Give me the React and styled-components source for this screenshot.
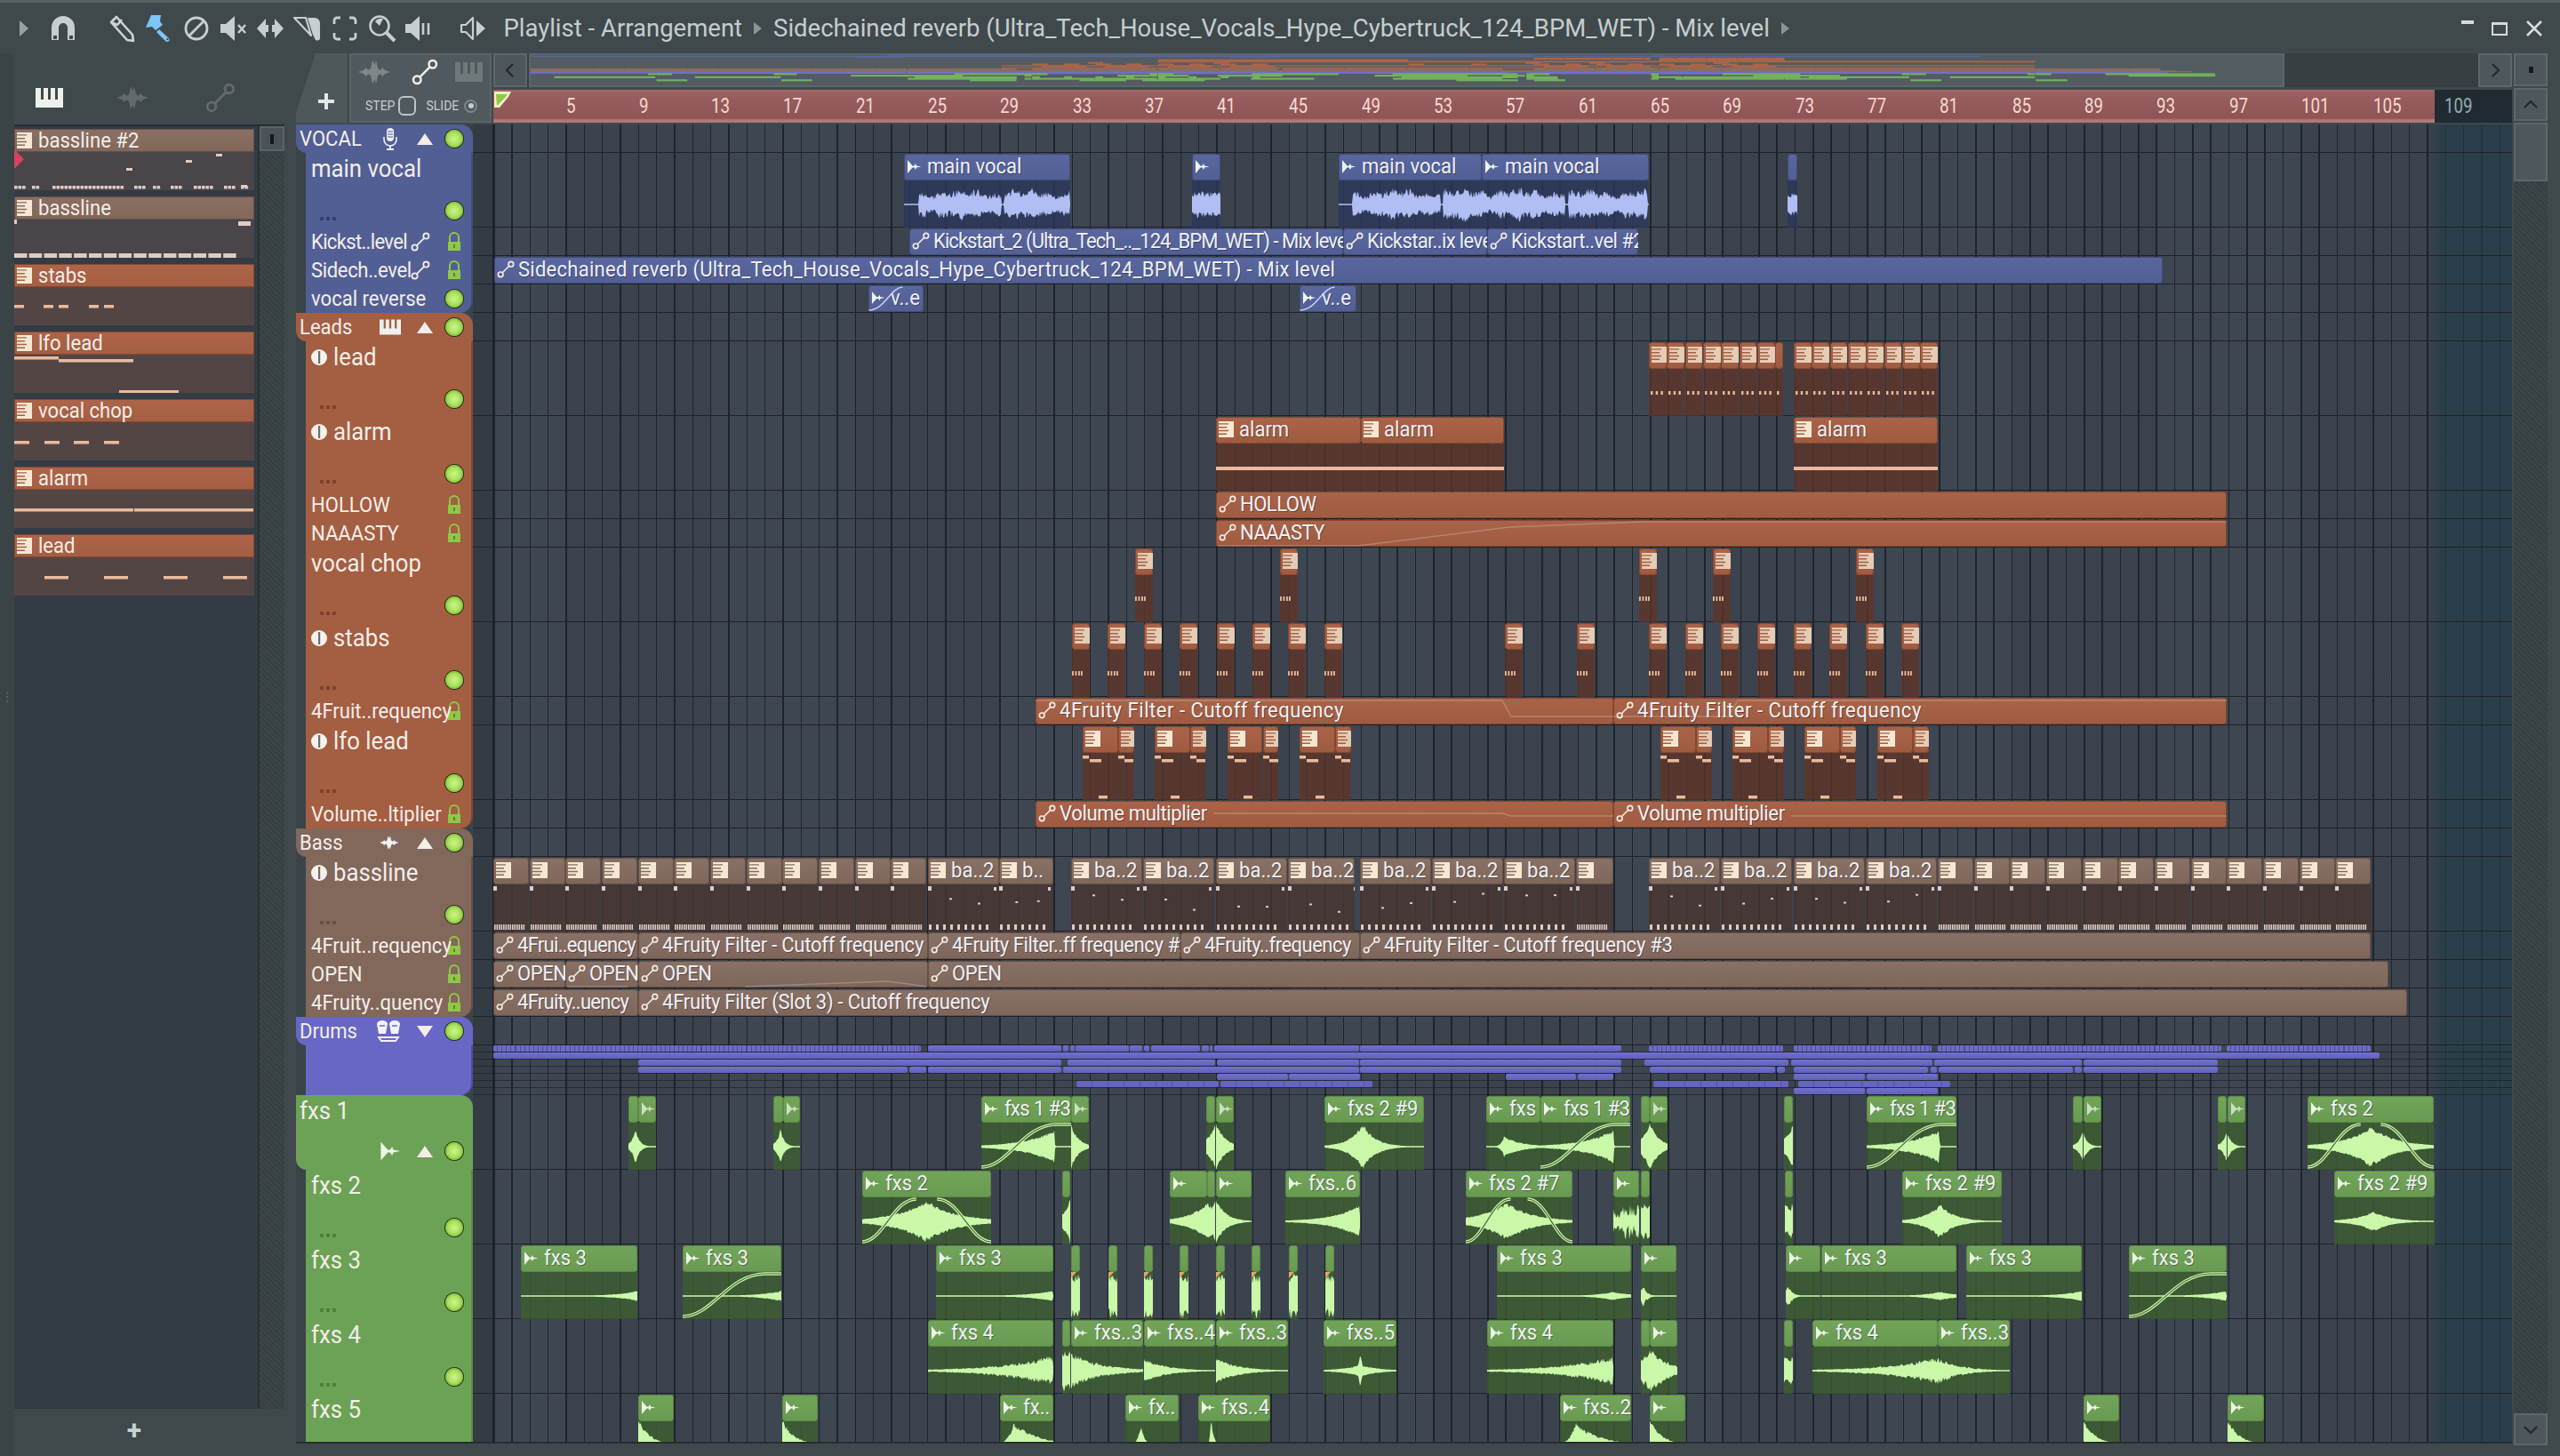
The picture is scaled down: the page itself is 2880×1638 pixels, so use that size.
import React from 'react';
import styled, { createGlobalStyle } from 'styled-components';

const GlobalStyle = createGlobalStyle`
  html, body { margin: 0; padding: 0; background: #3f494c; }
  * { box-sizing: border-box; }
`;

const BAR = 20.33;
const LANE_X = 532;

const tones = {
  blue: { head: '#525f94', top: '#5a67a0', clip: '#525f94', clipTop: '#5a67a0', edge: '#404c7c', body: 'rgba(42,55,90,.8)', ink: '#b0bef4', dots: '#343f70' },
  orange: { head: '#a45e42', top: '#ad654a', clip: '#9f5b40', clipTop: '#a96349', edge: '#86472f', body: 'rgba(94,53,40,.8)', ink: '#e9bb9d', dots: '#7e4230' },
  brown: { head: '#82675b', top: '#8a6f63', clip: '#7f665b', clipTop: '#8a7165', edge: '#665045', body: 'rgba(72,54,49,.8)', ink: '#dccbc3', dots: '#665045' },
  purple: { head: '#6867c5', top: '#7170cf', clip: '#6867c5', clipTop: '#7170cf', edge: '#4f4ea0', body: 'rgba(72,54,49,.8)', ink: '#fff', dots: '#4f4ea0' },
  green: { head: '#6ca255', top: '#74aa5c', clip: '#699a51', clipTop: '#72a45a', edge: '#5b8a44', body: 'rgba(61,94,48,.8)', ink: '#c9f8a9', dots: '#4f8038' },
};

// wave envelopes, x in page pixels
const S = (p, a, l, r = l) => x => a * Math.exp(-Math.abs(x - p) * (x < p ? l : r));
const F = (from, to, a) => x => (x >= from && x <= to ? a : 0);

const hash = n => {
  const v = Math.sin(n * 12.9898) * 43758.5453;
  return v - Math.floor(v);
};

const wavePath = (x0, w, env, noise, cy) => {
  const up = [];
  const down = [];
  for (let i = 0; i <= w; i += 1) {
    const x = x0 + i;
    const slow = noise >= 0.5 ? 0.66 + 0.34 * Math.abs(Math.sin(x * 0.045)) + 0.12 * Math.sin(x * 0.31) : 1;
    const e = Math.max(...env.map(f => f(x))) * slow;
    const a = Math.max(0.8, e * (1 - noise * hash(x * 1.3)));
    const b = Math.max(0.8, e * (1 - noise * hash(x * 2.7 + 5)));
    up.push(`${i} ${(cy - a).toFixed(1)}`);
    down.unshift(`${i} ${(cy + b).toFixed(1)}`);
  }
  return `M${up.join('L')}L${down.join('L')}Z`;
};

const W = (x, w, label, env, opts = {}) => ({ type: 'audio', x, w, label, env, ...opts });
const P = (x, w, label, notes) => ({ type: 'pattern', x, w, label, notes });
const A = (x, w, label, trace, ls) => ({ type: 'auto', x, w, label, trace, ls });
const R = (x, w, label, curve) => ({ type: 'reverse', x, w, label, curve });

const range = n => Array.from({ length: n }, (_, i) => i);

const leadNotes = w => range(Math.floor(w / 5.7)).map(i => [2 + i * 5.7, 56, 2.4, 4]);
const stabNotes = () => [0, 3.5, 7, 10].map(o => [o, 55, 1.8, 5]);
const leadGroup = (x, n, extra) => [
  ...range(n).map(i => P(x + i * BAR, BAR - 0.6, '', leadNotes(BAR))),
  ...(extra ? [P(x + n * BAR, extra, '', leadNotes(extra))] : []),
];
const lfoPair = x => [
  P(x, 39.5, '', [[0, 34, 7, 3.5], [8, 38, 13, 3.5], [18, 79, 10, 3.5]]),
  P(x + 40, 17.5, '', [[0, 34, 7, 3.5], [7, 38, 10, 3.5]]),
];
const bassNotes = (w, seed) => [
  [0, 33, 4, 5],
  ...(w > 60 ? [[w - 6, 34, 3, 4], [w * 0.3, 60 - 18 * hash(seed), 3, 2], [w * 0.7, 66 - 26 * hash(seed + 1), 3, 2]] : []),
  ...range(Math.floor((w - 3) / (w > 60 ? 8 : 2.5))).map(i => [1 + i * (w > 60 ? 8 : 2.5), 76, w > 60 ? 3 : 1.6, 6]),
];

const upCurve = 'up';
const bellCurve = 'bell';

const groups = [
  {
    title: 'VOCAL', tone: 'blue', icon: 'mic',
    rows: [
      { kind: 'big', name: 'main vocal', clips: [
        W(1017, 187, 'main vocal', [F(1034, 1126, 17), F(1130, 1203, 17)], { n: 0.5 }),
        W(1341, 32, '', [F(1341, 1373, 15)], { n: 0.45 }),
        W(1506, 161, 'main vocal', [F(1522, 1620, 17), F(1624, 1667, 18)], { n: 0.5 }),
        W(1667, 188, 'main vocal', [F(1667, 1760, 18), F(1765, 1853, 17)], { n: 0.5 }),
        W(2011, 11, '', [F(2011, 2022, 13)], { n: 0.45 }),
      ] },
      { kind: 'auto', name: 'Kickst..level', ls: -0.75, link: true, clips: [
        A(1023, 488, 'Kickstart_2 (Ultra_Tech_.._124_BPM_WET) - Mix level', null, -1.05),
        A(1511, 162, 'Kickstar..ix level', null, -0.7),
        A(1673, 170, 'Kickstart..vel #2', null, -0.6),
      ] },
      { kind: 'auto', name: 'Sidech..evel', ls: -0.4, link: true, clips: [
        A(556, 1877, 'Sidechained reverb (Ultra_Tech_House_Vocals_Hype_Cybertruck_124_BPM_WET) - Mix level', null, 0.25),
      ] },
      { kind: 'mini', name: 'vocal reverse', clips: [
        R(977, 62, 'v..e', true),
        R(1462, 64, 'v..e', true),
      ] },
    ],
  },
  {
    title: 'Leads', tone: 'orange', icon: 'piano',
    rows: [
      { kind: 'big', info: true, name: 'lead', clips: [...leadGroup(1855, 7, 9), ...leadGroup(2018, 8)] },
      { kind: 'big', info: true, name: 'alarm', clips: [
        P(1368, 163, 'alarm', [[0, 57, 163, 4]]),
        P(1531, 161, 'alarm', [[0, 57, 161, 4]]),
        P(2018, 162, 'alarm', [[0, 57, 162, 4]]),
      ] },
      { kind: 'auto', name: 'HOLLOW', clips: [A(1368, 1137, 'HOLLOW', null, -0.6)] },
      { kind: 'auto', name: 'NAAASTY', clips: [A(1368, 1137, 'NAAASTY', [[0, 29], [160, 29], [330, 8], [480, 2], [1137, 2]], -0.6)] },
      { kind: 'big', name: 'vocal chop', clips: [1277, 1440, 1844, 1927, 2088].map(x => P(x, 20, '', stabNotes())) },
      { kind: 'big', info: true, name: 'stabs', clips: [1205.6, 1246, 1287, 1327, 1368.6, 1408.5, 1449, 1490, 1693, 1774, 1855, 1896, 1936, 1977, 2018, 2058, 2099, 2139].map(x => P(x, 20, '', stabNotes())) },
      { kind: 'auto', name: '4Fruit..requency', clips: [
        A(1165, 650, '4Fruity Filter - Cutoff frequency', [[0, 3], [525, 3], [535, 21], [650, 21]], 0.55),
        A(1815, 690, '4Fruity Filter - Cutoff frequency', [[0, 21], [130, 21], [140, 3], [690, 3]], 0.55),
      ] },
      { kind: 'big', info: true, name: 'lfo lead', clips: [1218, 1299, 1380.5, 1462, 1868, 1949, 2030, 2112].flatMap(lfoPair) },
      { kind: 'auto', name: 'Volume..ltiplier', clips: [
        A(1165, 650, 'Volume multiplier', [[200, 14], [525, 14], [535, 17], [650, 17]], -0.4),
        A(1815, 690, 'Volume multiplier', [[200, 17], [690, 17]], -0.4),
      ] },
    ],
  },
  {
    title: 'Bass', tone: 'brown', icon: 'wave',
    rows: [
      { kind: 'big', info: true, name: 'bassline', clips: [
        ...range(12).map(i => P(555 + i * 40.66, 40, '', bassNotes(40, i))),
        P(1044, 80, 'ba..2', bassNotes(80, 20)),
        P(1124, 61, 'b..', bassNotes(61, 21)),
        ...[1205, 1286, 1368, 1449, 1530, 1611, 1692, 1855, 1936, 2018, 2099].map((x, i) => P(x, x === 1449 ? 75 : 80, 'ba..2', bassNotes(80, 30 + i))),
        P(1773, 42, '', bassNotes(40, 60)),
        ...range(12).map(i => P(2180 + i * 40.66, 40, '', bassNotes(40, i + 70))),
      ] },
      { kind: 'auto', name: '4Fruit..requency', clips: [
        A(555, 163, '4Frui..equency', null, -0.8),
        A(718, 326, '4Fruity Filter - Cutoff frequency', null, -0.3),
        A(1044, 284, '4Fruity Filter..ff frequency #2', null, -0.5),
        A(1328, 202, '4Fruity..frequency', null, -0.6),
        A(1530, 1137, '4Fruity Filter - Cutoff frequency #3', null, -0.3),
      ] },
      { kind: 'auto', name: 'OPEN', clips: [
        A(555, 81, 'OPEN', null, -0.5),
        A(636, 82, 'OPEN', [[0, 29], [70, 29]], -0.5),
        A(718, 326, 'OPEN', [[120, 29], [280, 23], [326, 29]], -0.5),
        A(1044, 1643, 'OPEN', null, -0.5),
      ] },
      { kind: 'auto', name: '4Fruity..quency', clips: [
        A(555, 163, '4Fruity..uency', null, -0.8),
        A(718, 1990, '4Fruity Filter (Slot 3) - Cutoff frequency', null, -0.3),
      ] },
    ],
  },
  {
    title: 'Drums', tone: 'purple', icon: 'drums', closed: true,
    thin: [
      { striped: true, bars: [[555, 481], [1855, 151], [2018, 155], [2180, 163], [2343, 156], [2505, 162]], solid: [[1044, 150], [1196, 6], [1204, 4.5], [1210, 60], [1271, 14], [1287, 6], [1295, 55], [1352, 8], [1361, 3], [1366, 163], [1530, 294]] },
      { bars: [], solid: [[555, 2122]] },
      { bars: [], solid: [[718, 476], [1200.7, 166], [1369, 160], [1530, 294], [1850, 162], [2015, 159], [2176, 166], [2344, 151]] },
      { bars: [], solid: [[718, 303], [1023, 19], [1044, 150], [1196, 333], [1530, 294], [1856, 141], [1999, 9], [2018, 151], [2172, 7], [2181, 151], [2334, 8], [2344, 151]] },
      { bars: [], solid: [[1369, 80], [1450, 80], [1694, 79], [1774.5, 40], [2018, 80], [2099.5, 80]] },
      { striped2: true, bars: [], solid: [[1211, 160], [1373, 171], [1860, 152], [2023, 171]] },
      { bars: [], solid: [[2018, 80], [2099.5, 80]] },
    ],
    rows: [],
  },
  {
    title: 'fxs 1', tone: 'green', icon: 'audio', big: true,
    clips: [
      W(707, 11, '', [S(715, 20, 0.22)]),
      W(718, 20, '', [S(715, 20, 0.22)]),
      W(870, 11, '', [S(878, 20, 0.22)]),
      W(881, 19, '', [S(878, 20, 0.22)]),
      W(1104, 101, 'fxs 1 #3', [S(1186, 19, 0.03, 2)], { curve: upCurve, ls: -0.7 }),
      W(1205, 20, '', [S(1205, 26, 0.12)]),
      W(1357, 10, '', [S(1368, 28, 0.1)]),
      W(1368, 20, '', [S(1368, 28, 0.1)]),
      W(1490, 112, 'fxs 2 #9', [S(1533, 27, 0.07)]),
      W(1672, 61, 'fxs', [S(1692, 12, 0.3, 0.05), S(1815, 19, 0.03, 2)]),
      W(1733, 101, 'fxs 1 #3', [S(1692, 12, 0.3, 0.05), S(1815, 19, 0.03, 2)], { curve: upCurve, ls: -0.7 }),
      W(1845.6, 10, '', [S(1856, 28, 0.1)]),
      W(1855.7, 20, '', [S(1856, 28, 0.1)]),
      W(2007, 10, '', [S(2018, 28, 0.1)]),
      W(2099.5, 101, 'fxs 1 #3', [S(2181, 19, 0.03, 2)], { curve: upCurve, ls: -0.7 }),
      W(2332, 11, '', [S(2343, 18, 0.2)]),
      W(2343.5, 20, '', [S(2343, 18, 0.2)]),
      W(2495, 10, '', [S(2505, 18, 0.2)]),
      W(2505.7, 20, '', [S(2505, 18, 0.2)]),
      W(2596, 142, 'fxs 2', [S(2667, 24, 0.035)], { curve: bellCurve }),
    ],
    rows: [
      { kind: 'big', name: 'fxs 2', clips: [
        W(970, 145, 'fxs 2', [S(1042, 24, 0.03)], { curve: bellCurve }),
        W(1195, 9, '', [S(1204, 26, 0.12)]),
        W(1315.5, 42, '', [S(1358, 22, 0.05), S(1368, 26, 0.1)]),
        W(1358, 9, '', [S(1358, 22, 0.05), S(1368, 26, 0.1)]),
        W(1368, 40, '', [S(1368, 26, 0.09)]),
        W(1445.5, 84, 'fxs..6', [S(1529, 19, 0.035, 2)]),
        W(1649, 120, 'fxs 2 #7', [S(1695, 22, 0.035)], { curve: bellCurve }),
        W(1815, 29, '', [F(1815, 1844, 22)], { n: 0.8 }),
        W(1845.6, 10, '', [S(1850, 22, 0.01)], { n: 0.45 }),
        W(2008, 9, '', [F(2008, 2017, 20)], { n: 0.45 }),
        W(2139.5, 112.5, 'fxs 2 #9', [S(2182, 20, 0.06)]),
        W(2626, 112.6, 'fxs 2 #9', [S(2670, 12, 0.05)]),
      ] },
      { kind: 'big', name: 'fxs 3', clips: [
        W(585.6, 131, 'fxs 3', [S(717, 6, 0.04, 2)]),
        W(768, 111, 'fxs 3', [S(879, 6, 0.04, 2)], { curve: upCurve }),
        W(1053, 132, 'fxs 3', [S(1184, 6, 0.035, 2)]),
        ...[1205, 1246.6, 1287, 1327, 1368, 1408, 1449.6, 1490.5].map(x => W(x, 10, '', [F(x, x + 10, 25)], { n: 0.45, flag: true })),
        W(1683.6, 151, 'fxs 3', [S(1814, 5, 0.05)]),
        W(1845.6, 40, '', [S(1848, 14, 0.22)], { n: 0.45 }),
        W(2008.6, 39, '', [S(2012, 14, 0.22)], { n: 0.45 }),
        W(2048.6, 152, 'fxs 3', [S(2182, 5, 0.05)]),
        W(2211.6, 130, 'fxs 3', [S(2342, 6, 0.04, 2)]),
        W(2394.7, 110, 'fxs 3', [S(2504, 6, 0.04, 2)], { curve: upCurve }),
      ] },
      { kind: 'big', name: 'fxs 4', clips: [
        W(1043.7, 141, 'fxs 4', [S(1184, 18, 0.018, 2)], { n: 0.4 }),
        W(1195, 9, '', [S(1198, 26, 0.03)], { n: 0.4 }),
        W(1205, 81, 'fxs..3', [S(1198, 26, 0.03)], { n: 0.4 }),
        W(1286.6, 80, 'fxs..4', [S(1287, 14, 0.04)], { n: 0.3 }),
        W(1368, 81, 'fxs..3', [S(1368, 15, 0.04)], { n: 0.3 }),
        W(1488.6, 82, 'fxs..5', [S(1530, 20, 0.4), S(1530, 7, 0.05)]),
        W(1672.5, 142, 'fxs 4', [S(1814, 17, 0.018, 2)], { n: 0.4 }),
        W(1845.6, 10, '', [S(1857, 26, 0.05)], { n: 0.4 }),
        W(1855.7, 31, '', [S(1857, 26, 0.05)], { n: 0.4 }),
        W(2007, 10, '', [F(2007, 2017, 16)], { n: 0.4 }),
        W(2038.5, 141, 'fxs 4', [S(2180, 16, 0.018)], { n: 0.4 }),
        W(2180, 81, 'fxs..3', [S(2180, 16, 0.04)], { n: 0.4 }),
      ] },
      { kind: 'big', name: 'fxs 5', clips: [
        W(718, 40, '', [S(718, 30, 0.07)]),
        W(880, 40, '', [S(880, 30, 0.07)]),
        W(1124.5, 60, 'fx..', [S(1140, 26, 0.15, 0.035)]),
        W(1266.4, 60, 'fx..', [S(1284, 24, 0.25)]),
        W(1347.7, 81, 'fxs..4', [S(1362, 36, 0.9, 0.35)]),
        W(1754.7, 80, 'fxs..2', [S(1772, 26, 0.15, 0.035)]),
        W(1855.7, 40, '', [S(1856, 30, 0.07)]),
        W(2343.5, 40, '', [S(2344, 30, 0.07)]),
        W(2505.7, 41, '', [S(2506, 30, 0.07)]),
      ] },
    ],
  },
];

const pickerItems = [
  { name: 'bassline #2', tone: 'brown', notes: [
    [227, 28, 7, 3], [193, 35, 7, 3], [126, 44, 7, 3], [255, 63, 7, 3],
    ...[[0, 16], [20, 11], [43, 82], [135, 16], [156, 10], [176, 16], [202, 24], [236, 16], [255, 13]]
      .flatMap(([x, w]) => range(Math.floor(w / 4.5)).map(i => [x + i * 4.5, 64, 3.6, 3.5])),
  ] },
  { name: 'bassline', tone: 'brown', notes: [
    [0, 26, 3, 5], [252, 28, 14, 5],
    ...range(15).map(i => [i * 16.8, 64, 14.4, 5]),
  ] },
  { name: 'stabs', tone: 'orange', notes: [[0, 46, 11, 3.5], [33, 46, 11, 3.5], [50, 46, 11, 3.5], [84, 46, 11, 3.5], [101, 46, 11, 3.5]] },
  { name: 'lfo lead', tone: 'orange', notes: [[0, 28, 50, 3.5], [50, 31, 84, 3.5], [118, 66, 67, 3.5]] },
  { name: 'vocal chop', tone: 'orange', notes: [[0, 47, 17, 3.5], [34, 47, 17, 3.5], [67, 47, 17, 3.5], [101, 47, 17, 3.5]] },
  { name: 'alarm', tone: 'orange', notes: [[0, 47, 134, 3.5], [135, 47, 134, 3.5]] },
  { name: 'lead', tone: 'orange', notes: [[34, 47, 27, 3.5], [101, 47, 27, 3.5], [168, 47, 27, 3.5], [235, 47, 27, 3.5]] },
];

const Page = styled.div`
  width: 2880px;
  height: 1638px;
  overflow: hidden;
  display: flex;
  flex-direction: column;
  background: #3f494c;
  font-family: Roboto, 'Liberation Sans', sans-serif;
  border-top: 3px solid #566063;
`;

// the reference font is narrower than Roboto, so names are squeezed a little
const Tight = styled.span`
  display: inline-block;
  white-space: nowrap;
  transform: scaleX(0.92);
  transform-origin: 0 50%;
  letter-spacing: ${p => p.$ls || 0}px;
`;

const TitleBar = styled.div`
  height: 57px;
  flex: none;
  display: flex;
  align-items: center;
  padding-left: 21px;
  color: #c9d1d3;
`;

const ToolGroup = styled.div`
  display: flex;
  align-items: center;
  gap: ${p => p.$gap || 10}px;
  margin-right: ${p => p.$after || 0}px;
`;

const TitleText = styled.div`
  font-size: 27.5px;
  color: #c5cdcf;
  white-space: nowrap;
  display: flex;
  align-items: center;
  gap: 13px;
  margin-left: 18px;
`;

const WindowButtons = styled.div`
  margin-left: auto;
  margin-right: 19px;
  display: flex;
  align-items: center;
  gap: 20px;
`;

const Workspace = styled.div`
  flex: 1;
  display: flex;
  min-height: 0;
`;

const Gutter = styled.div`
  width: 16px;
  flex: none;
  background: #3a4447;
  display: flex;
  align-items: center;
  justify-content: center;
  color: #5d686b;
  font-size: 14px;
  padding-bottom: 130px;
`;

const Picker = styled.div`
  width: 304px;
  flex: none;
  display: flex;
  flex-direction: column;
  margin-right: 13px;
`;

const PickerTabs = styled.div`
  height: 78px;
  flex: none;
  display: flex;
  align-items: center;
  padding: 22px 0 0 24px;
  gap: 60px;
  color: #eef0ee;
`;

const FadedIcon = styled.span`
  display: flex;
  opacity: ${p => p.$o || 0.2};
`;

const PickerBody = styled.div`
  flex: none;
  height: 1445px;
  display: flex;
  border-top: 2px solid #262d30;
  margin-top: 2px;
  background: #333b45;
`;

const PickerList = styled.div`
  width: 270px;
  flex: none;
  padding-top: 3px;
  display: flex;
  flex-direction: column;
  gap: 7px;
`;

const PickerScroll = styled.div`
  flex: 1;
  margin-left: 4px;
  background: repeating-linear-gradient(45deg, #3c4648 0 2px, #353e40 2px 4px);
  border-left: 2px solid #2a3134;
`;

const ScrollThumb = styled.div`
  height: 28px;
  background: #4a5458;
  border: 2px solid #59636a;
  display: flex;
  align-items: center;
  justify-content: center;
  &::after { content: ''; width: 4px; height: 11px; background: #15191b; }
`;

const PickerFooter = styled.div`
  flex: 1;
  display: flex;
  align-items: center;
  justify-content: center;
  color: #c9d1d3;
  font-size: 30px;
  font-weight: 700;
  padding: 0 34px 6px 0;
`;

const PickerItem = styled.div`
  height: 69px;
  flex: none;
  position: relative;
  background: ${p => (p.$tone === 'brown' ? '#4a4549' : '#544545')};
`;

const PickerHead = styled.div`
  height: 26px;
  display: flex;
  align-items: center;
  gap: 7px;
  padding-left: 3px;
  font-size: 24px;
  color: #f3eee9;
  border-radius: 2px;
  background: linear-gradient(${p => tones[p.$tone].top}, ${p => tones[p.$tone].head});
  box-shadow: inset 0 0 0 1px ${p => tones[p.$tone].edge};
`;

const PlayMark = styled.div`
  position: absolute;
  left: 0;
  top: 23px;
  width: 0;
  height: 0;
  border-left: 11px solid #d8425a;
  border-top: 11px solid transparent;
  border-bottom: 11px solid transparent;
`;

const Main = styled.div`
  flex: 1;
  display: flex;
  min-width: 0;
  margin-right: 14px;
`;

const Center = styled.div`
  width: 2493px;
  flex: none;
  display: flex;
  flex-direction: column;
`;

const TopRow = styled.div`
  height: 80px;
  flex: none;
  display: flex;
`;

const AddTab = styled.div`
  width: 58px;
  height: 78px;
  flex: none;
  background: #4e585b;
  clip-path: polygon(22px 0, 100% 0, 100% 100%, 0 100%, 0 86%);
  display: flex;
  align-items: flex-end;
  justify-content: flex-end;
  padding: 0 15px 15px 0;
  color: #e3e7e8;
`;

const LaneTools = styled.div`
  width: 160px;
  height: 78px;
  flex: none;
  margin: 0 2px;
  background: #505a5e;
  border: 2px solid #596468;
  display: flex;
  flex-direction: column;
  padding: 1px 8px 0;
  color: #d5dbdc;
`;

const ToolIcons = styled.div`
  display: flex;
  justify-content: space-between;
  align-items: center;
  height: 36px;
`;

const StepRow = styled.div`
  display: flex;
  align-items: center;
  font-size: 14px;
  color: #c6cdcf;
  margin-top: 9px;
  padding-left: 8px;
`;

const StepBox = styled.span`
  width: 20px;
  height: 22px;
  margin: 0 11px 0 4px;
  border: 2px solid #bcc4c6;
  border-radius: 6px;
`;

const SlideDot = styled.span`
  width: 15px;
  height: 15px;
  margin-left: 6px;
  border-radius: 50%;
  border: 2px solid #7c8689;
  display: flex;
  align-items: center;
  justify-content: center;
  &::after { content: ''; width: 6px; height: 6px; border-radius: 50%; background: #c6cdcf; }
`;

const Timeline = styled.div`
  flex: 1;
  min-width: 0;
  display: flex;
  flex-direction: column;
`;

const OverviewRow = styled.div`
  height: 38px;
  flex: none;
  display: flex;
  gap: 2px;
  background: #373f42;
`;

const SquareButton = styled.div`
  width: 38px;
  height: ${p => p.$h || 38}px;
  flex: none;
  background: #4e585c;
  border: 2px solid #5d676b;
  display: flex;
  align-items: center;
  justify-content: center;
  color: #23292c;
  margin-left: ${p => (p.$push ? 'auto' : 0)};
`;

const OverviewBox = styled.div`
  width: 1975px;
  flex: none;
  background: #525c61;
  border: 2px solid #5b666b;
`;

const Ruler = styled.div`
  height: 37px;
  margin-top: 3px;
  flex: none;
  display: flex;
  background: #1f2a31;
  position: relative;
`;

const RulerBars = styled.div`
  width: 2184px;
  flex: none;
  display: flex;
  overflow: hidden;
  background: linear-gradient(#a56a6b 0, #9a5f60 3px, #8e5456 32px, #b07877 34px, #b07877 37px);
`;

const RulerCell = styled.div`
  width: ${4 * BAR}px;
  flex: none;
  padding: 3px 0 0 1px;
`;

const RulerNum = styled.span`
  display: inline-block;
  font-size: 24px;
  line-height: 30px;
  transform: scaleX(0.78);
  transform-origin: left center;
  color: ${p => (p.$dim ? '#94aab2' : '#f5d8cf')};
`;

const RulerEnd = styled.div`
  flex: 1;
  padding: 3px 0 0 11px;
`;

const StartMarker = styled.svg`
  position: absolute;
  left: 1px;
  top: 2px;
`;

const Tracks = styled.div`
  height: 1484px;
  flex: none;
  display: flex;
  overflow: hidden;
  border-bottom: 2px solid #262d30;
`;

const HeaderColumn = styled.div`
  width: 199px;
  flex: none;
  display: flex;
  flex-direction: column;
  background: #3a4448;
`;

const Group = styled.div`
  flex: none;
  display: flex;
  flex-direction: column;
`;

const GroupTitle = styled.div`
  height: ${p => (p.$big ? 84 : 32)}px;
  flex: none;
  background: ${p => tones[p.$tone].head};
  border-radius: 0 14px 0 12px;
  color: #f3eee9;
  font-size: ${p => (p.$big ? 28 : 24)}px;
  padding: 0 10px 0 4px;
  display: flex;
  flex-direction: ${p => (p.$big ? 'column' : 'row')};
  align-items: ${p => (p.$big ? 'stretch' : 'center')};
  justify-content: ${p => (p.$big ? 'space-between' : 'flex-start')};
  padding-top: ${p => (p.$big ? 1 : 0)}px;
  padding-bottom: ${p => (p.$big ? 9 : 0)}px;
`;

const TitleName = styled.span`
  flex: 1;
`;

const TitleControls = styled.div`
  display: flex;
  align-items: center;
  gap: 13px;
  flex: none;
  justify-content: flex-end;
`;

const GroupIcon = styled.span`
  display: flex;
  margin-right: 5px;
`;

const GroupBody = styled.div`
  margin-left: 11px;
  background: ${p => tones[p.$tone].head};
  border-radius: 0 0 14px 0;
  border-right: 2px solid ${p => tones[p.$tone].edge};
  display: flex;
  flex-direction: column;
  min-height: ${p => p.$fill || 0}px;
`;

const BigRow = styled.div`
  height: 84px;
  flex: none;
  position: relative;
  padding: 0 8px 0 6px;
  display: flex;
  flex-direction: column;
  justify-content: space-between;
  color: #f3eee9;
`;

const BigName = styled.div`
  font-size: 28px;
  line-height: 35px;
  display: flex;
  align-items: center;
  gap: 7px;
`;

const BigFoot = styled.div`
  display: flex;
  align-items: flex-end;
  justify-content: space-between;
  padding-bottom: 8px;
`;

const Dots = styled.span`
  display: flex;
  gap: 3px;
  margin: 0 0 0 10px;
  & > i { width: 4px; height: 4px; background: ${p => tones[p.$tone].dots}; }
`;

const SmallRow = styled.div`
  height: 32px;
  flex: none;
  display: flex;
  align-items: center;
  padding: 0 8px 0 6px;
  font-size: 24px;
  color: #f3eee9;
  white-space: nowrap;
`;

const SmallName = styled.span`
  flex: 1;
  min-width: 0;
`;

const RowLink = styled.span`
  display: flex;
  margin-right: 19px;
`;

const RowLock = styled.span`
  display: flex;
  margin-right: 3px;
`;

const Led = styled.span`
  width: 22px;
  height: 22px;
  flex: none;
  border-radius: 50%;
  display: block;
  background: radial-gradient(circle at 50% 50%, #cdf58c 0, #a9e05c 45%, #86c23d 62%, #1d2418 68%, #1d2418 80%, rgba(150,150,140,.65) 84%, rgba(150,150,140,.35) 100%);
`;

const LaneColumn = styled.div`
  width: 2294px;
  flex: none;
  display: flex;
  flex-direction: column;
  background-color: #3e4651;
  background-image:
    linear-gradient(90deg, rgba(44,62,72,0) 2198px, rgba(35,60,72,.72) 2218px),
    linear-gradient(90deg, #333c45 0 22px, #1b2127 22px 24px, transparent 24px),
    repeating-linear-gradient(90deg, #1d242b 0 1.5px, transparent 1.5px ${BAR}px),
    repeating-linear-gradient(90deg, rgba(0,0,0,.05) 0 ${BAR * 8}px, transparent ${BAR * 8}px ${BAR * 16}px);
  background-position: 0 0, 0 0, 23px 0, 104px 0;
  background-repeat: no-repeat;
`;

const Lane = styled.div`
  height: ${p => p.$h}px;
  flex: none;
  position: relative;
  border-bottom: ${p => (p.$h < 10 ? 1 : 1.5)}px solid ${p => (p.$h < 10 ? 'rgba(24,29,34,.6)' : '#1c2228')};
`;

const ClipBox = styled.div.attrs(p => ({ style: { left: p.$x - LANE_X, width: p.$w } }))`
  position: absolute;
  top: 0;
  height: ${p => p.$h}px;
  display: flex;
  flex-direction: column;
`;

const ClipHead = styled.div`
  height: ${p => p.$h || 30}px;
  margin-top: 1px;
  flex: none;
  position: relative;
  border-radius: 4px;
  background: linear-gradient(${p => tones[p.$tone].clipTop}, ${p => tones[p.$tone].clip});
  box-shadow: inset 0 0 0 1px ${p => tones[p.$tone].edge};
  display: flex;
  align-items: center;
  gap: ${p => p.$gap || 6}px;
  padding: 0 0 2px 3px;
  overflow: hidden;
  color: #eef0f6;
  font-size: 24px;
  white-space: nowrap;
  text-shadow: 1px 1px 0 rgba(0,0,0,.32);
`;

const ClipGlyph = styled.span`
  flex: none;
  display: flex;
  opacity: ${p => p.$o || 1};
`;

const ClipBody = styled.div`
  flex: 1;
  position: relative;
  background: ${p => tones[p.$tone].body};
  overflow: hidden;
`;

const ThinBar = styled.div.attrs(p => ({ style: { left: p.$x - LANE_X, width: p.$w } }))`
  position: absolute;
  top: 0;
  height: 6.5px;
  border-radius: 2px;
  background: ${p => (p.$striped
    ? 'repeating-linear-gradient(90deg, #6c6bc8 0 4px, #4d4c9c 4px 5.1px)'
    : p.$seg
      ? 'repeating-linear-gradient(90deg, #6665c2 0 17px, #5655ac 17px 18px)'
      : 'linear-gradient(#7170cf, #6160bd)')};
`;

const ScrollColumn = styled.div`
  width: 38px;
  flex: none;
  margin-left: 2px;
  display: flex;
  flex-direction: column;
  gap: 2px;
  padding-bottom: 12px;
`;

const ScrollTrack = styled.div`
  flex: 1;
  display: flex;
  flex-direction: column;
  justify-content: space-between;
  background: repeating-linear-gradient(45deg, #3c4648 0 2px, #353e40 2px 4px);
`;

const NoteDot = styled.span`
  width: 5px;
  height: 7px;
  background: #15191b;
`;

// icons
const Icon = ({ s = 32, children, ...rest }) => (
  <svg width={s} height={s} viewBox="0 0 32 32" fill="none" {...rest}>{children}</svg>
);

const ToolIcon = {
  arrow: () => <svg width="12" height="24" viewBox="0 0 12 24"><path d="M1 3l10 9-10 9z" fill="#98a2a5" /></svg>,
  magnet: () => (
    <Icon>
      <path d="M3 29V15a13 13 0 0 1 26 0v14h-8V15a5 5 0 0 0-10 0v14z" fill="#c7ced0" />
      <path d="M5 24h4v4H5zM23 24h4v4h-4z" fill="#3f494c" />
    </Icon>
  ),
  pencil: () => (
    <Icon>
      <path d="M4 9l6-6 18 20 1 7-7-1zM4 9l7 3 5-6" stroke="#cdd4d6" strokeWidth="2.6" strokeLinejoin="round" />
    </Icon>
  ),
  brush: () => (
    <Icon>
      <path d="M7 1h11l-1 7 3 4-8 6-4-4-7 1z" fill="#7cc4f6" />
      <path d="M16 17l11 10a2.5 2.5 0 0 1-4 3L13 20z" fill="#7cc4f6" />
      <circle cx="25.5" cy="28" r="1.2" fill="#3f494c" />
    </Icon>
  ),
  mute: () => (
    <Icon>
      <circle cx="16" cy="16" r="12" stroke="#c7ced0" strokeWidth="2.8" />
      <path d="M8 24L24 8" stroke="#c7ced0" strokeWidth="2.8" />
    </Icon>
  ),
  speakerX: () => (
    <Icon>
      <path d="M2 11h6l10-9v28l-10-9H2z" fill="#c7ced0" />
      <path d="M22 12l8 9M30 12l-8 9" stroke="#c7ced0" strokeWidth="2.6" />
    </Icon>
  ),
  slip: () => (
    <Icon>
      <path d="M1 16l10-11v7h3v8h-3v7zM31 16L21 5v7h-3v8h3v7z" fill="#c7ced0" />
    </Icon>
  ),
  slice: () => (
    <Icon>
      <path d="M1 4h13l6 20z" stroke="#c7ced0" strokeWidth="2.2" strokeLinejoin="round" />
      <path d="M16 4h8a6 6 0 0 1 6 6v16a3 3 0 0 1-6 1l-2-4z" fill="#c7ced0" />
    </Icon>
  ),
  select: () => (
    <Icon>
      <path d="M4 11V7a3 3 0 0 1 3-3h4M21 4h4a3 3 0 0 1 3 3v4M28 21v4a3 3 0 0 1-3 3h-4M11 28H7a3 3 0 0 1-3-3v-4" stroke="#c7ced0" strokeWidth="2.8" />
    </Icon>
  ),
  zoom: () => (
    <Icon>
      <circle cx="13" cy="13" r="10.5" stroke="#c7ced0" strokeWidth="2.6" />
      <path d="M21 21l9 9" stroke="#c7ced0" strokeWidth="4" />
      <path d="M13 13l4-8a9 9 0 0 0-9 3z" fill="#c7ced0" />
    </Icon>
  ),
  play: () => (
    <Icon>
      <path d="M1 11h6l10-9v28l-10-9H1z" fill="#c7ced0" />
      <path d="M21 10v13M27 10v13" stroke="#c7ced0" strokeWidth="2.6" />
    </Icon>
  ),
  speaker: () => (
    <Icon>
      <path d="M3 12h5l8-8v24l-8-8H3z" stroke="#c7ced0" strokeWidth="2.2" strokeLinejoin="round" />
      <path d="M20 7l10 9-10 9z" fill="#c7ced0" />
    </Icon>
  ),
};

const PatternIcon = ({ c = '#f6e8d2' }) => (
  <svg width="17" height="18" viewBox="0 0 17 18">
    <path d="M0 0h17v18H0v-3h9v-1.4H0v-2.4h11V9.8H0V7.4h9V6H0V3.6h11V2.2H0z" fill={c} />
  </svg>
);

const AudioGlyph = ({ c = '#eef4e8', s = 17 }) => (
  <svg width={s} height={s} viewBox="0 0 17 17">
    <path d="M1 1l5.5 6.5h2L10 5l1 2.5 5.5 1-5.5 1L10 12 8.5 9.5h-2L1 16z" fill={c} />
  </svg>
);

const AutoIcon = ({ c = '#f2ede6', s = 22 }) => (
  <svg width={s} height={s} viewBox="0 0 24 24" fill="none">
    <circle cx="5" cy="19" r="3.4" stroke={c} strokeWidth="2" />
    <circle cx="19" cy="5" r="3.4" stroke={c} strokeWidth="2" />
    <path d="M7.5 16.5l9-9" stroke={c} strokeWidth="2" />
  </svg>
);

const PianoIcon = ({ s = 31, h = 22, c = '#eef0ee' }) => (
  <svg width={s} height={h} viewBox="0 0 31 22">
    <path d="M0 0h31v22H0zM6 0v13h3V0zM14 0v13h3V0zM22 0v13h3V0z" fill={c} fillRule="evenodd" />
  </svg>
);

const WaveIcon = ({ s = 40, h = 26, c = '#eef0ee' }) => (
  <svg width={s} height={h} viewBox="0 0 40 26">
    <path d="M0 13l6-2 3-3 2 3 3-2 2-9 2.5 5 1.5-5 2 9 3 2 2-3 3 3 6 2-6 2-3 3-2-3-3 2-2 9-1.5-5-2.5 5-2-9-3-2-2 3-3-3z" fill={c} />
  </svg>
);

const InfoIcon = () => (
  <svg width="18" height="20" viewBox="0 0 18 20">
    <circle cx="9" cy="10" r="9" fill="#f6f1ea" />
    <rect x="8" y="3" width="2.2" height="14" fill="#333" opacity=".7" />
  </svg>
);

const MicIcon = () => (
  <svg width="24" height="26" viewBox="0 0 24 26" fill="none">
    <rect x="8" y="1" width="8" height="15" rx="4" fill="#eef0f4" />
    <path d="M9 5h6M9 8h6M9 11h6" stroke="#515e93" strokeWidth="1" />
    <path d="M5 11v3a7 7 0 0 0 14 0v-3" stroke="#eef0f4" strokeWidth="1.6" />
    <path d="M12 21v3M8 25h8" stroke="#eef0f4" strokeWidth="1.8" />
  </svg>
);

const DrumsIcon = () => (
  <svg width="28" height="26" viewBox="0 0 28 26">
    <path d="M1 5a6 4 0 0 1 12 0l-2 11H3zM15 5a6 4 0 0 1 12 0l-2 11h-8z" fill="#f3f3fb" />
    <path d="M4 7h6M18 7h6" stroke="#6867c5" strokeWidth="1.4" />
    <path d="M3 20h22l-3 4H6z" fill="none" stroke="#f3f3fb" strokeWidth="1.8" />
  </svg>
);

const Triangle = ({ down }) => (
  <svg width="18" height="13" viewBox="0 0 18 13">
    <path d={down ? 'M0 0h18l-9 13z' : 'M9 0l9 13H0z'} fill="#f3eee9" />
  </svg>
);

const LockIcon = () => (
  <svg width="16" height="22" viewBox="0 0 16 22" fill="none">
    <path d="M3 11V6a5 5 0 0 1 10 0v5" stroke="#8fc748" strokeWidth="2" />
    <path d="M1 11h14v10H1z" fill="#8fc748" />
    <path d="M8 14v4" stroke="#55732c" strokeWidth="1.6" />
  </svg>
);

const Chevron = ({ dir = 'left', c = '#23292c', s = 20 }) => {
  const d = {
    left: 'M13 3L6 10l7 7',
    right: 'M7 3l7 7-7 7',
    up: 'M3 13l7-7 7 7',
    down: 'M3 7l7 7 7-7',
  }[dir];
  return <svg width={s} height={s} viewBox="0 0 20 20" fill="none"><path d={d} stroke={c} strokeWidth="2.2" /></svg>;
};

const Roll = ({ notes, w, h, c }) => (
  <svg width={w} height={h} style={{ position: 'absolute', left: 0, top: 0 }}>
    {notes.map((n, i) => <rect key={i} x={n[0]} y={n[1]} width={n[2]} height={n[3]} fill={c} />)}
  </svg>
);

const Curve = ({ w, kind, tone }) => {
  const H = 50;
  const d = kind === 'bell'
    ? `M0 ${H}C${w * 0.16} ${H} ${w * 0.24} 2 ${w * 0.42} 2M${w * 0.58} 2C${w * 0.76} 2 ${w * 0.84} ${H} ${w} ${H}`
    : `M0 ${H}C${w * 0.3} ${H} ${w * 0.46} 2 ${w * 0.84} 2L${w} 2`;
  return (
    <svg width={w} height="53" style={{ position: 'absolute', left: 0, top: 0 }} fill="none">
      <path d={d} stroke={tones[tone].ink} strokeWidth="3.6" />
      <path d={d} stroke="#4a6a3d" strokeWidth="1.2" />
    </svg>
  );
};

const Clip = ({ clip, tone, h }) => {
  const { type, x, w, label, ls } = clip;
  const t = tones[tone];
  if (type === 'auto') {
    return (
      <ClipBox $x={x} $w={w} $h={h}>
        <ClipHead $tone={tone} $h={h - 2} $gap={4}>
          <ClipGlyph><AutoIcon s={20} /></ClipGlyph>
          <Tight $ls={ls}>{label}</Tight>
          {clip.trace && (
            <svg width={w} height={h - 2} style={{ position: 'absolute', left: 0, top: 0 }} fill="none">
              <polyline points={clip.trace.map(p => p.join(',')).join(' ')} stroke="#fff" strokeOpacity=".22" strokeWidth="1.5" />
            </svg>
          )}
        </ClipHead>
      </ClipBox>
    );
  }
  if (type === 'reverse') {
    return (
      <ClipBox $x={x} $w={w} $h={h}>
        <ClipHead $tone={tone} $h={h - 2}>
          <ClipGlyph><AudioGlyph s={16} /></ClipGlyph>
          <Tight>{label}</Tight>
          <svg width={w} height={h - 2} style={{ position: 'absolute', left: 0, top: 0 }} fill="none">
            <path d={`M0 ${h - 4}C${w * 0.3} ${h - 4} ${w * 0.4} 2 ${w * 0.62} 2`} stroke="#c5cdf5" strokeWidth="1.6" />
          </svg>
        </ClipHead>
      </ClipBox>
    );
  }
  return (
    <ClipBox $x={x} $w={w} $h={h}>
      <ClipHead $tone={tone}>
        {type === 'pattern' && w >= 14 && (
          <ClipGlyph $o={w < 30 ? 0.8 : 1}><PatternIcon /></ClipGlyph>
        )}
        {type === 'audio' && w >= 14 && (
          <ClipGlyph $o={w < 24 && !label ? 0.75 : 1}><AudioGlyph /></ClipGlyph>
        )}
        {label && <Tight $ls={ls}>{label}</Tight>}
      </ClipHead>
      <ClipBody $tone={tone}>
        {type === 'audio' && (
          <svg width={w} height="53" style={{ position: 'absolute', left: 0, top: 0 }}>
            <path d={wavePath(x, w, clip.env, clip.n ?? 0.22, 27)} fill={t.ink} />
            {clip.flag && <path d="M0 0h6L0 7z" fill="#e0a860" />}
          </svg>
        )}
        {type === 'audio' && clip.curve && <Curve w={w} kind={clip.curve} tone={tone} />}
        {type === 'pattern' && (
          <Roll w={w} h={53} c={t.ink} notes={clip.notes.map(n => [n[0], n[1] - 31, n[2], n[3]])} />
        )}
      </ClipBody>
    </ClipBox>
  );
};

const RowHeader = ({ row, tone }) => {
  if (row.kind === 'big') {
    return (
      <BigRow>
        <BigName>{row.info && <InfoIcon />}<Tight>{row.name}</Tight></BigName>
        <BigFoot>
          <Dots $tone={tone}><i /><i /><i /></Dots>
          <Led />
        </BigFoot>
      </BigRow>
    );
  }
  return (
    <SmallRow>
      <SmallName><Tight $ls={row.ls}>{row.name}</Tight></SmallName>
      {row.link && <RowLink><AutoIcon s={22} /></RowLink>}
      {row.kind === 'auto' ? <RowLock><LockIcon /></RowLock> : <Led />}
    </SmallRow>
  );
};

const groupIcon = {
  mic: <MicIcon />,
  piano: <PianoIcon s={24} h={20} />,
  wave: <WaveIcon s={24} h={22} />,
  drums: <DrumsIcon />,
  audio: <AudioGlyph s={24} />,
};

const GroupHeader = ({ group }) => {
  const { tone, rows, thin, big, title, icon, closed } = group;
  return (
    <Group>
      <GroupTitle $tone={tone} $big={big}>
        <TitleName><Tight>{title}</Tight></TitleName>
        <TitleControls>
          <GroupIcon>{groupIcon[icon]}</GroupIcon>
          <Triangle down={closed} />
          <Led />
        </TitleControls>
      </GroupTitle>
      <GroupBody $tone={tone} $fill={thin ? 56 : 0}>
        {rows.map((row, i) => <RowHeader key={i} row={row} tone={tone} />)}
      </GroupBody>
    </Group>
  );
};

// flatten rows so the overview can reuse the clips
const overviewRects = () => {
  const out = [];
  let y = 140;
  const add = (clips, tone, h) => {
    (clips || []).forEach(c => {
      out.push({ x: (c.x - 555) * 0.868, w: c.w * 0.868, y: 60 + (y - 140) * 0.0205 - 62, h: Math.max(1.2, h * 0.025), c: tones[tone].head === tones.green.head ? '#74b35a' : tones[tone].top });
    });
    y += h;
  };
  groups.forEach(g => {
    add(g.clips, g.tone, g.big ? 84 : 32);
    (g.thin || []).forEach(r => {
      add([...r.bars, ...r.solid].map(([x, w]) => ({ x, w })), g.tone, 8);
    });
    g.rows.forEach(r => add(r.clips, g.tone, r.kind === 'big' ? 84 : 32));
  });
  return out;
};

const Overview = () => (
  <OverviewBox>
    <svg width="1971" height="34" style={{ display: 'block' }}>
      {overviewRects().map((r, i) => <rect key={i} x={r.x} y={r.y} width={r.w} height={r.h} fill={r.c} />)}
    </svg>
  </OverviewBox>
);

export default function App() {
  const ticks = range(27);
  return (
    <Page>
      <GlobalStyle />
      <TitleBar>
        <ToolGroup $after={22}><ToolIcon.arrow /></ToolGroup>
        <ToolGroup $after={34}><ToolIcon.magnet /></ToolGroup>
        <ToolGroup $gap={9.8} $after={29}>
          <ToolIcon.pencil />
          <ToolIcon.brush />
          <ToolIcon.mute />
          <ToolIcon.speakerX />
          <ToolIcon.slip />
          <ToolIcon.slice />
          <ToolIcon.select />
          <ToolIcon.zoom />
          <ToolIcon.play />
        </ToolGroup>
        <ToolIcon.speaker />
        <TitleText>
          <span>Playlist - Arrangement</span>
          <svg width="9" height="14" viewBox="0 0 9 14"><path d="M0 0l9 7-9 7z" fill="#8b9598" /></svg>
          <span>Sidechained reverb (Ultra_Tech_House_Vocals_Hype_Cybertruck_124_BPM_WET) - Mix level</span>
          <svg width="9" height="14" viewBox="0 0 9 14"><path d="M0 0l9 7-9 7z" fill="#8b9598" /></svg>
        </TitleText>
        <WindowButtons>
          <svg width="14" height="5" style={{ marginBottom: 12 }}><rect width="14" height="4" fill="#d5dbdc" /></svg>
          <svg width="18" height="16" viewBox="0 0 18 16" fill="none"><rect x="1" y="2" width="16" height="13" stroke="#d5dbdc" strokeWidth="2" /><rect x="1" y="1" width="16" height="3" fill="#d5dbdc" /></svg>
          <svg width="20" height="20" viewBox="0 0 20 20"><path d="M2 2l16 16M18 2L2 18" stroke="#d5dbdc" strokeWidth="2.6" /></svg>
        </WindowButtons>
      </TitleBar>
      <Workspace>
        <Gutter>⋮</Gutter>
        <Picker>
          <PickerTabs>
            <PianoIcon />
            <FadedIcon><WaveIcon /></FadedIcon>
            <FadedIcon><AutoIcon s={34} /></FadedIcon>
          </PickerTabs>
          <PickerBody>
            <PickerList>
              {pickerItems.map((item, i) => (
                <PickerItem key={item.name} $tone={item.tone}>
                  <PickerHead $tone={item.tone}>
                    <PatternIcon />
                    <Tight>{item.name}</Tight>
                  </PickerHead>
                  <Roll w={270} h={69} c={item.tone === 'brown' ? tones.brown.ink : tones.orange.ink} notes={item.notes} />
                  {i === 0 && <PlayMark />}
                </PickerItem>
              ))}
            </PickerList>
            <PickerScroll><ScrollThumb /></PickerScroll>
          </PickerBody>
          <PickerFooter>+</PickerFooter>
        </Picker>
        <Main>
          <Center>
            <TopRow>
              <AddTab>
                <svg width="18" height="18" viewBox="0 0 18 18"><path d="M7 0h4v7h7v4h-7v7H7v-7H0V7h7z" fill="#e3e7e8" /></svg>
              </AddTab>
              <LaneTools>
                <ToolIcons>
                  <FadedIcon $o={0.3}><WaveIcon /></FadedIcon>
                  <AutoIcon s={30} />
                  <FadedIcon $o={0.3}><PianoIcon c="#b8c0c2" /></FadedIcon>
                </ToolIcons>
                <StepRow>
                  STEP
                  <StepBox />
                  SLIDE
                  <SlideDot />
                </StepRow>
              </LaneTools>
              <Timeline>
                <OverviewRow>
                  <SquareButton><Chevron dir="left" /></SquareButton>
                  <Overview />
                  <SquareButton $push><Chevron dir="right" /></SquareButton>
                </OverviewRow>
                <Ruler>
                  <RulerBars>
                    {ticks.map(i => (
                      <RulerCell key={i}>
                        {i > 0 && <RulerNum>{1 + i * 4}</RulerNum>}
                      </RulerCell>
                    ))}
                  </RulerBars>
                  <RulerEnd><RulerNum $dim>109</RulerNum></RulerEnd>
                  <StartMarker width="20" height="18" viewBox="0 0 20 18">
                    <path d="M0 0h19l-3 6-10 12H0z" fill="#f2f0c0" />
                    <path d="M2 3h13l-3 4-9 9z" fill="#8fc748" />
                  </StartMarker>
                </Ruler>
              </Timeline>
            </TopRow>
            <Tracks>
              <HeaderColumn>
                {groups.map(g => <GroupHeader key={g.title} group={g} />)}
              </HeaderColumn>
              <LaneColumn>
                {groups.map(g => (
                  <React.Fragment key={g.title}>
                    <Lane $h={g.big ? 84 : 32}>
                      {(g.clips || []).map((c, i) => <Clip key={i} clip={c} tone={g.tone} h={84} />)}
                    </Lane>
                    {(g.thin || []).map((r, i) => (
                      <Lane key={i} $h={8}>
                        {r.bars.map(([x, w]) => <ThinBar key={x} $x={x} $w={w} $striped={r.striped} />)}
                        {r.solid.map(([x, w]) => <ThinBar key={x} $x={x} $w={w} $seg={r.striped2} />)}
                      </Lane>
                    ))}
                    {g.rows.map((row, i) => {
                      const h = row.kind === 'big' ? 84 : 32;
                      return (
                        <Lane key={i} $h={h}>
                          {row.clips.map((c, j) => <Clip key={j} clip={c} tone={g.tone} h={h} />)}
                        </Lane>
                      );
                    })}
                  </React.Fragment>
                ))}
              </LaneColumn>
            </Tracks>
          </Center>
          <ScrollColumn>
            <SquareButton $h={37}><NoteDot /></SquareButton>
            <SquareButton $h={37}><Chevron dir="up" /></SquareButton>
            <ScrollTrack>
              <SquareButton $h={66} />
              <SquareButton $h={36}><Chevron dir="down" /></SquareButton>
            </ScrollTrack>
          </ScrollColumn>
        </Main>
      </Workspace>
    </Page>
  );
}
